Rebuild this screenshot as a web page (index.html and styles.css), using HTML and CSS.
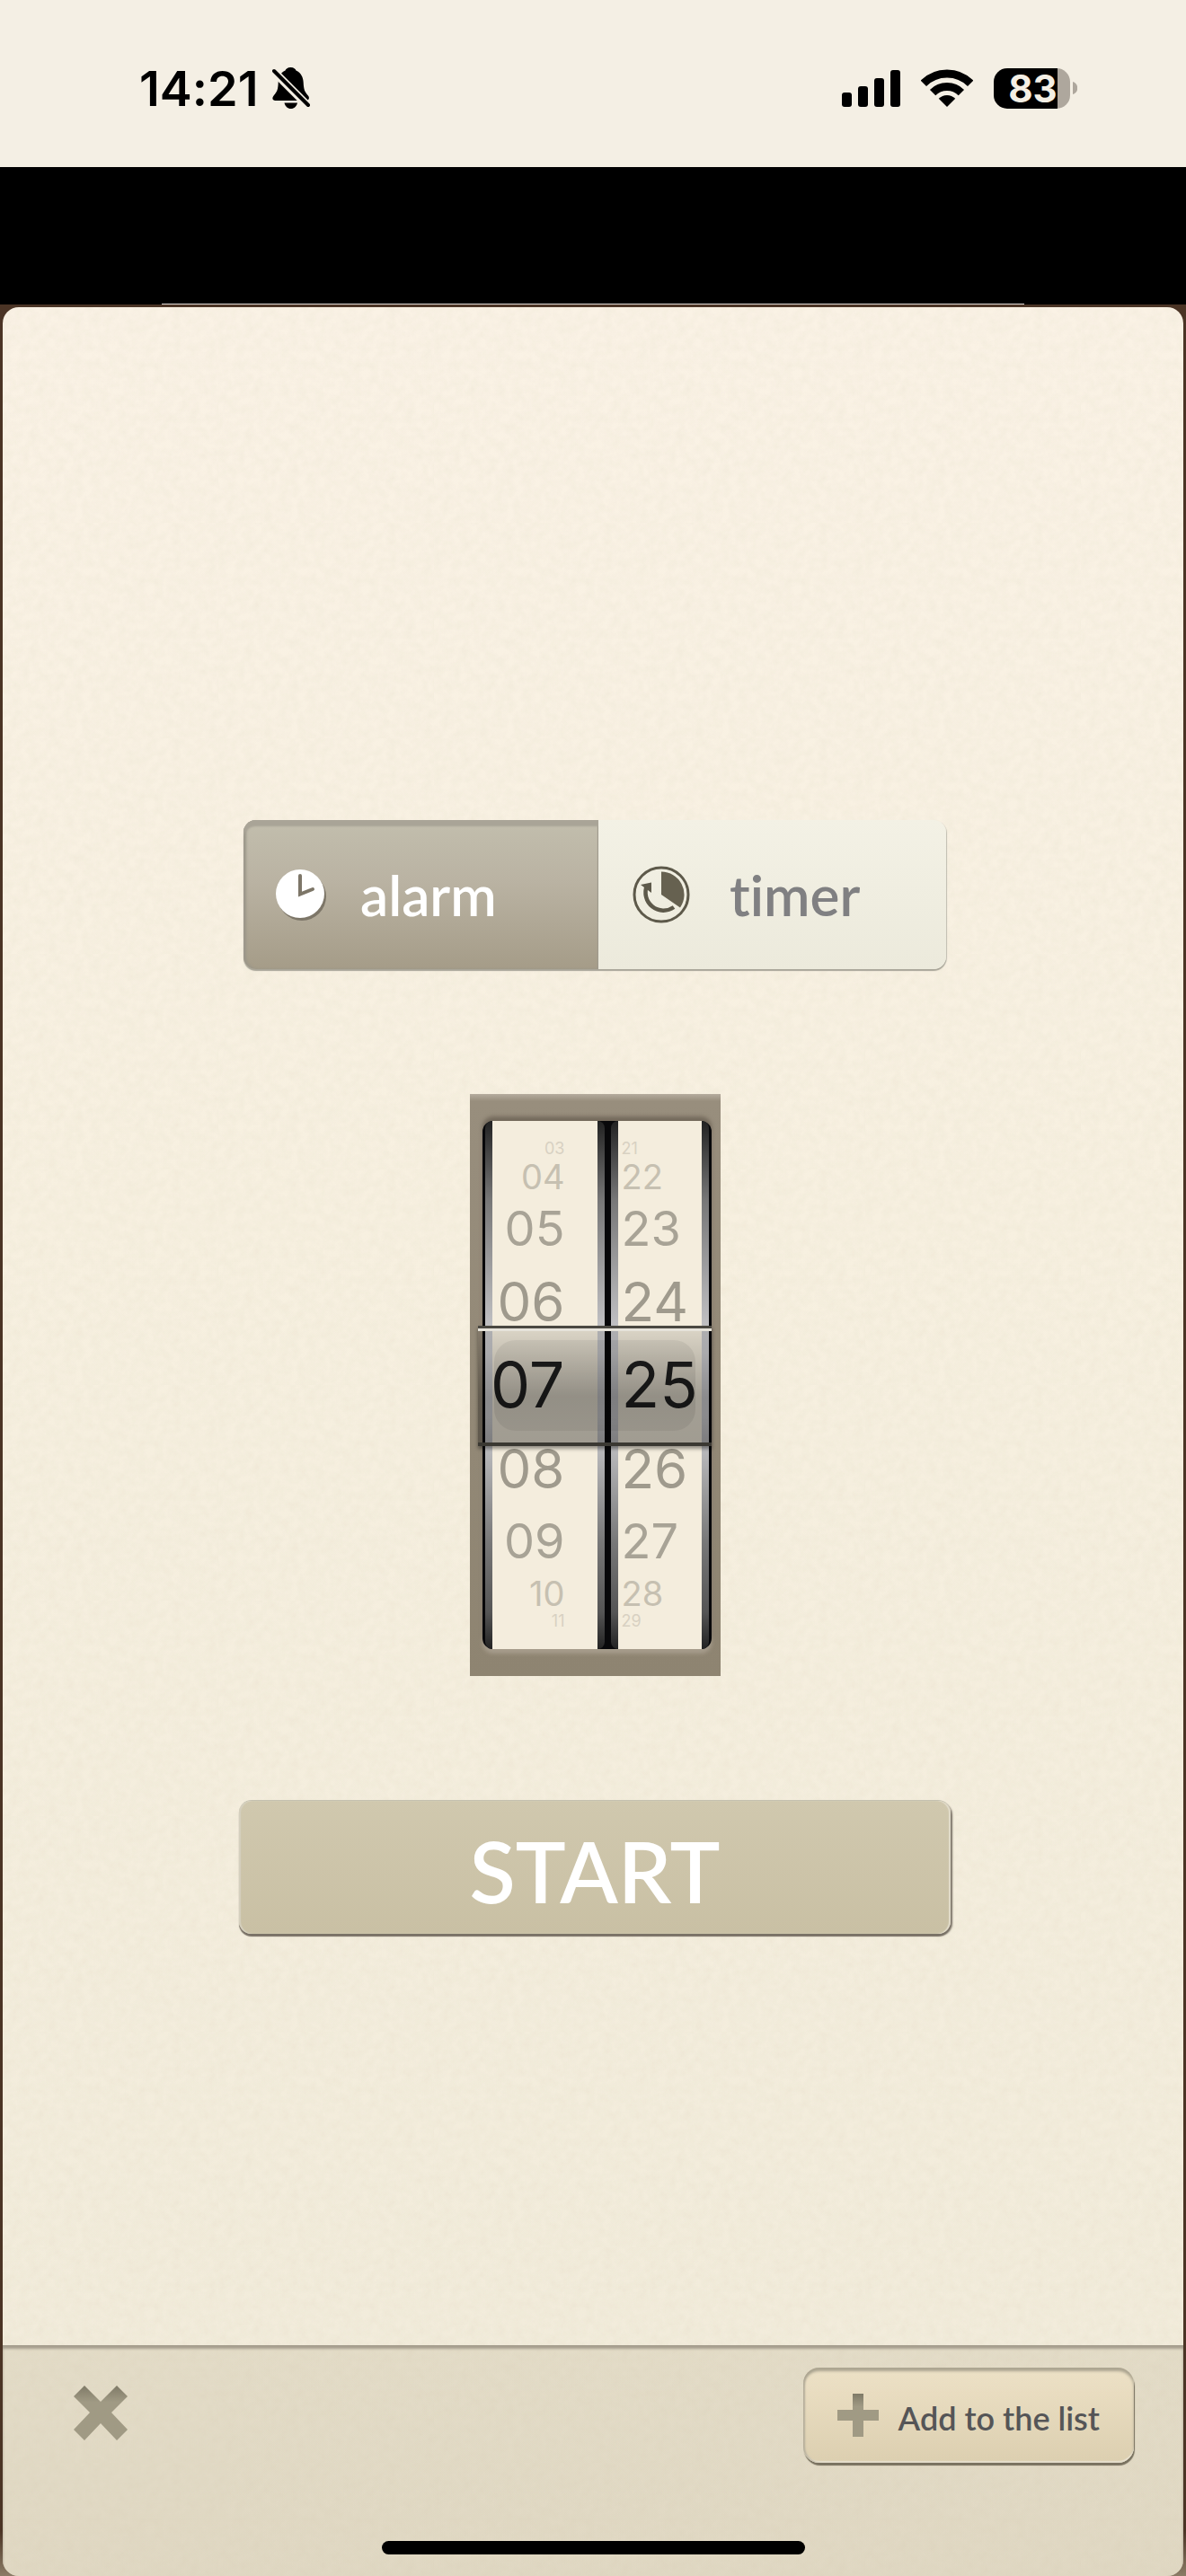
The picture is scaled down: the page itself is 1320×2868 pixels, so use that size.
FILE: index.html
```html
<!DOCTYPE html>
<html lang="en">
<head>
  <meta charset="UTF-8" />
  <meta name="viewport" content="width=device-width, initial-scale=1" />
  <title>Alarm</title>
  <link rel="stylesheet" href="styles.css">
</head>
<body>
  <header class="status-bar">
    <div class="status-left">
      <span class="time">14:21</span>
      <svg class="bell" width="42" height="46" viewBox="0 0 42 46" aria-label="Silent">
        <path d="M20.500 0C17 0 15 2 14.500 3.500C9 6 7 11 6.700 17C6.500 24 5.500 27 2 31C-1 34.500 .5 37 3.500 37H38C41 37 42 33.500 39.500 31C36 27 35 24 34.700 17C34.500 11 32 6 26.500 3.500C26 2 24 0 20.500 0Z" fill="#000"/>
        <path d="M13.500 39.500H28C27 43.500 24.500 46 20.700 46C17 46 14.500 43.500 13.500 39.500Z" fill="#000"/>
        <path d="M1 4L40 43" stroke="#f4efe4" stroke-width="9"/>
        <path d="M2 4L40 42" stroke="#000" stroke-width="4" stroke-linecap="round"/>
      </svg>
    </div>
    <div class="status-right">
      <svg width="65" height="42" viewBox="0 0 65 42" aria-label="Signal">
        <rect x="0" y="26" width="11" height="16" rx="3"/>
        <rect x="18" y="19" width="11" height="23" rx="3"/>
        <rect x="36" y="10" width="11" height="32" rx="3"/>
        <rect x="54" y="1" width="11" height="41" rx="3"/>
      </svg>
      <svg width="58" height="42" viewBox="0 0 58 42" aria-label="Wi-Fi">
        <clipPath id="wedge"><path d="M29 42L-20 -7H78Z"/></clipPath>
        <g clip-path="url(#wedge)">
          <circle cx="29" cy="42" r="37" fill="none" stroke="#000" stroke-width="9"/>
          <circle cx="29" cy="42" r="22.500" fill="none" stroke="#000" stroke-width="9"/>
          <circle cx="29" cy="42" r="13"/>
        </g>
      </svg>
      <div class="battery">
        <span class="battery-level">83</span>
        <svg width="5" height="14" viewBox="0 0 5 14"><path d="M0 0C7 2 7 12 0 14Z" fill="#aea79d"/></svg>
      </div>
    </div>
  </header>

  <div class="gap-bar"></div>

  <div class="backdrop">
    <div class="sheet">
      <main class="content">
        <div class="mode" role="radiogroup" aria-label="Mode">
          <input type="radio" name="mode" id="mode-alarm" checked />
          <label class="mode-alarm" for="mode-alarm">
            <svg width="60" height="60" viewBox="0 0 60 60">
              <circle cx="31" cy="32" r="27" fill="#7d7668"/>
              <circle cx="29" cy="29" r="27" fill="#fff"/>
              <path d="M29 9V29.500L43 24" fill="none" stroke="#7d7668" stroke-width="4" stroke-linecap="round"/>
            </svg>
            alarm
          </label>
          <input type="radio" name="mode" id="mode-timer" />
          <label class="mode-timer" for="mode-timer">
            <svg width="64" height="64" viewBox="0 0 64 64">
              <circle cx="32" cy="32" r="30" fill="none" stroke="#5d594a" stroke-width="3"/>
              <path d="M32 6.500A25.500 25.500 0 0 1 53 46.500L32 32Z" fill="#666150"/>
              <path d="M46 46A20 20 0 0 1 16 22" fill="none" stroke="#5d594a" stroke-width="4.500"/>
              <path d="M9 21L21 18.500V30Z" fill="#5d594a"/>
            </svg>
            timer
          </label>
        </div>

        <div class="picker">
          <div class="window">
            <ul class="drum hours" role="listbox" aria-label="Hours">
              <li class="far" role="option">03</li>
              <li class="edge" role="option">04</li>
              <li class="mid" role="option">05</li>
              <li class="near" role="option">06</li>
              <li class="current" role="option" aria-selected="true">07</li>
              <li class="near" role="option">08</li>
              <li class="mid" role="option">09</li>
              <li class="edge" role="option">10</li>
              <li class="far" role="option">11</li>
            </ul>
            <ul class="drum minutes" role="listbox" aria-label="Minutes">
              <li class="far" role="option">21</li>
              <li class="edge" role="option">22</li>
              <li class="mid" role="option">23</li>
              <li class="near" role="option">24</li>
              <li class="current" role="option" aria-selected="true">25</li>
              <li class="near" role="option">26</li>
              <li class="mid" role="option">27</li>
              <li class="edge" role="option">28</li>
              <li class="far" role="option">29</li>
            </ul>
            <div class="band"></div>
          </div>
        </div>

        <button class="start" type="button">START</button>
      </main>

      <footer class="toolbar">
        <button class="close" type="button" aria-label="Close">
          <svg width="62" height="62" viewBox="0 0 62 62">
            <defs>
              <linearGradient id="cut" x1="0" y1="0" x2="0" y2="1">
                <stop offset="0" stop-color="#7f7a67"/>
                <stop offset=".3" stop-color="#a09a84"/>
                <stop offset="1" stop-color="#a09a84"/>
              </linearGradient>
            </defs>
            <path d="M1 12L13 0L31 18L49 0L61 12L43 30L61 49L49 61L31 42L13 61L1 49L19 30Z" fill="url(#cut)"/>
          </svg>
        </button>
        <button class="add" type="button">
          <svg width="46" height="48" viewBox="0 0 46 48">
            <path d="M17 0H29V18H46V30H29V48H17V30H0V18H17Z" fill="url(#cut)"/>
          </svg>
          <span>Add to the list</span>
        </button>
      </footer>
    </div>
  </div>
  <div class="home-indicator"></div>
</body>
</html>
```

FILE: styles.css
```css
* {
  box-sizing: border-box;
}

body {
  margin: 0;
  min-height: 100vh;
  display: flex;
  flex-direction: column;
  background: #000;
  font-family: Futura, Lato, sans-serif;
  font-variant-ligatures: none;
}

button {
  border: 0;
  font-family: inherit;
  cursor: pointer;
}

svg {
  flex: none;
  display: block;
}

/* Status bar */
.status-bar {
  height: 186px;
  padding: 10px 121px 0 155px;
  display: flex;
  align-items: center;
  justify-content: space-between;
  background: #f4efe4;
  font-family: Inter, sans-serif;
  color: #000;
}

.status-left {
  display: flex;
  align-items: center;
  gap: 15px;
}

.time {
  font-size: 54px;
  font-weight: 600;
}

.status-right {
  display: flex;
  align-items: center;
  gap: 23px;
}

.battery {
  display: flex;
  align-items: center;
  gap: 3px;
}

.battery-level {
  width: 85px;
  height: 45px;
  padding-left: 2px;
  border-radius: 15px;
  background: linear-gradient(to right, #000 83%, #aea79d 83%);
  color: #f4efe4;
  font-size: 42px;
  font-weight: 700;
  line-height: 45px;
  text-align: center;
}

.gap-bar {
  height: 153px;
  padding: 0 180px;
  background: #000;
  display: flex;
  align-items: flex-end;
}

.gap-bar::after {
  content: '';
  flex: 1;
  height: 1px;
  background: #e4dfda;
}

/* Paper sheet */
.backdrop {
  flex: 1;
  display: flex;
  padding: 3px 3px 0;
  background: linear-gradient(to bottom, #4b3425 98%, #8b7c66);
}

.sheet {
  flex: 1;
  display: flex;
  flex-direction: column;
  border-radius: 18px;
  overflow: hidden;
  background:
    url("data:image/svg+xml,%3Csvg xmlns='http://www.w3.org/2000/svg' width='240' height='240'%3E%3Cfilter id='n'%3E%3CfeTurbulence type='fractalNoise' baseFrequency='.1' numOctaves='3' stitchTiles='stitch'/%3E%3CfeColorMatrix values='0 0 0 0 .5 0 0 0 0 .45 0 0 0 0 .3 .14 0 0 0 -.04'/%3E%3C/filter%3E%3Crect width='240' height='240' filter='url(%23n)'/%3E%3C/svg%3E"),
    linear-gradient(to bottom, #faf2e5, #f7f0e0 40%, #f1ebda);
}

.content {
  flex: 1;
  padding: 112px 0 0 4px;
  display: flex;
  flex-direction: column;
  align-items: center;
  justify-content: center;
  gap: 139px;
}

/* Alarm / timer switch */
.mode {
  position: relative;
  width: 60%;
  max-width: 782px;
  display: flex;
  border-radius: 14px;
  box-shadow: 0 2px 1px #a9a699, 1px 1px 1px #c4c1b5;
  font-size: 62px;
}

.mode input {
  position: absolute;
  opacity: 0;
}

.mode label {
  flex: 1;
  height: 166px;
  display: flex;
  align-items: center;
  cursor: pointer;
}

.mode .mode-alarm {
  padding: 0 72px 0 34px;
  gap: 36px;
  border-radius: 14px 0 0 14px;
  background: linear-gradient(to bottom, #c2bead, #bab3a3 40%, #a59c88);
  box-shadow: inset 0 7px 2px #a9a497, inset 3px 0 3px #9b9689, inset -1px 0 1px #9b9689;
  color: #fff;
}

.mode .mode-timer {
  padding: 0 60px 0 38px;
  gap: 44px;
  border-radius: 0 14px 14px 0;
  background: linear-gradient(to bottom, #f3f1e5, #eceadc);
  color: #808082;
}

.mode-alarm,
.mode-timer,
.start {
  font-weight: 600;
}

/* Time wheels */
.picker {
  padding: 30px 10px 30px 14px;
  background: linear-gradient(to bottom, #b5ac9e, #988e7d 8px, #8e8471);
}

.window {
  position: relative;
  display: flex;
  gap: 7px;
  padding: 0 3px;
  border-radius: 12px;
  background: #08080a;
  box-shadow: 0 -5px 4px #746a5c, 0 5px 4px #a69c8c;
}

.drum {
  margin: 0;
  padding: 0 8px;
  list-style: none;
  border-radius: 8px;
  background: linear-gradient(to bottom, #222, #777 15%, #d0d0d3 44%, #d0d0d3 56%, #777 80%, #555 93%, #222);
  font-family: Inter, sans-serif;
  line-height: 1;
  color: #222;
}

.drum::before,
.drum::after {
  content: '';
  display: block;
  height: 22px;
  background: #f4eddd;
}

.drum li {
  display: flex;
  align-items: center;
  background: #f4eddd;
}

.hours li {
  width: 117px;
  padding-right: 36px;
  justify-content: flex-end;
}

.minutes li {
  width: 93px;
  padding-left: 4px;
}

.drum .far {
  height: 18px;
  font-size: 18px;
  color: #d8d1c2;
}

.drum .edge {
  height: 44px;
  font-size: 38px;
  color: #c6c0b1;
}

.drum .mid {
  height: 72px;
  font-size: 54px;
  color: #a8a396;
}

.drum .near {
  height: 90px;
  font-size: 60px;
  color: #9f9a8d;
}

.drum .current {
  height: 96px;
  font-size: 70px;
  color: #222;
}

/* glass strip over the chosen row */
.band {
  position: absolute;
  inset: 228px 0 226px -5px;
  border-top: 3px solid #4a4841;
  border-bottom: 4px solid #3a3832;
  background: linear-gradient(to bottom, rgba(0, 0, 0, .1), rgba(0, 0, 0, .33) 60%, rgba(0, 0, 0, .34));
  box-shadow: inset 0 3px #e6e3da, 0 3px 4px rgba(0, 0, 0, .4);
}

.band::after {
  content: '';
  position: absolute;
  inset: 13px 18px;
  border-radius: 24px;
  background: linear-gradient(to bottom, rgba(0, 0, 0, .06), rgba(0, 0, 0, .1) 60%, rgba(0, 0, 0, .06));
}

.start {
  width: 61%;
  max-width: 792px;
  height: 148px;
  padding: 8px 0 0;
  border-radius: 14px;
  background: linear-gradient(to bottom, #d0c8ae, #c9c0a4);
  box-shadow: 0 -1px #c5c1b0, 0 3px 1px #7a7267, 2px 2px 2px #7a7267, inset -2px 0 1px #e2dccb, inset 2px 0 1px #d5d0bf;
  color: #fff;
  font-size: 94px;
  line-height: 120px;
}

/* Bottom toolbar */
.toolbar {
  min-height: 257px;
  padding: 25px 55px 0 78px;
  display: flex;
  align-items: flex-start;
  justify-content: space-between;
  background: linear-gradient(to bottom, rgba(205, 196, 170, .4), rgba(203, 192, 166, .45));
  box-shadow: inset 0 4px 3px #a59d8d;
}

.close {
  margin-top: 20px;
  padding: 0;
  background: none;
}

.add {
  height: 106px;
  padding: 0 38px;
  display: flex;
  align-items: center;
  gap: 22px;
  border-radius: 18px;
  background: linear-gradient(to bottom, #ede1c6, #dccfb0);
  box-shadow: inset 0 4px 3px #aca591, inset 2px 0 2px #b9b29f, inset 0 -2px 1px #e9e3d2, 1px 3px 1px #78715f;
  color: #555557;
  font-size: 36px;
  font-weight: 600;
}

.add span {
  padding-top: 6px;
}

.home-indicator {
  position: fixed;
  left: 50%;
  bottom: 24px;
  width: 471px;
  height: 15px;
  margin-left: -235px;
  border-radius: 8px;
  background: #000;
}
```
